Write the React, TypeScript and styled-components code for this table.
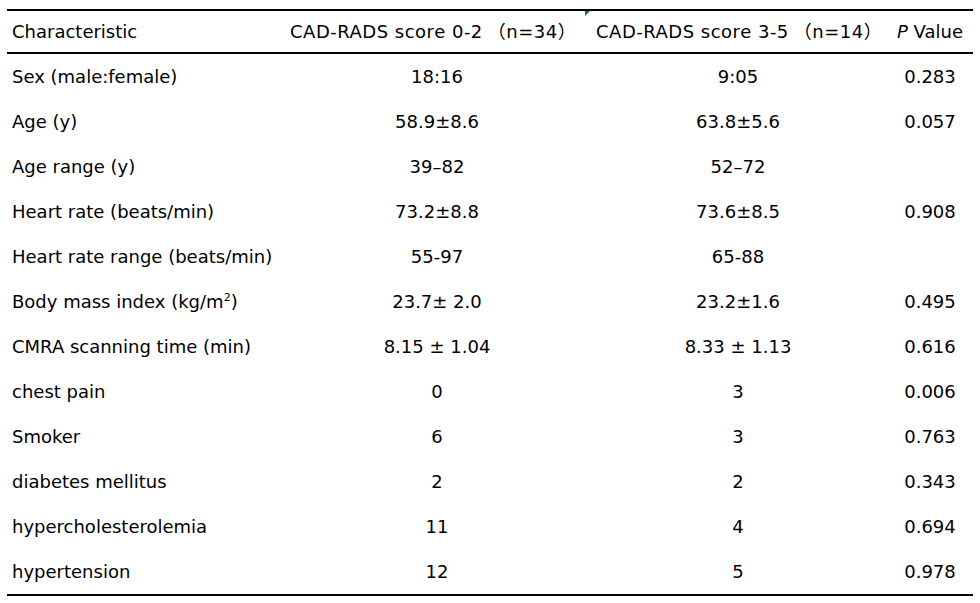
import { createGlobalStyle } from "styled-components";
import styled from "styled-components";

const GlobalStyle = createGlobalStyle`
  html, body {
    margin: 0;
    padding: 0;
    background: #ffffff;
  }
  body {
    font-family: "DejaVu Sans", "Noto Sans CJK SC", sans-serif;
    color: #000000;
  }
`;

const Page = styled.div`
  width: 980px;
  height: 603px;
  padding: 9px 0 0 7px;
  box-sizing: border-box;
`;

const Table = styled.div`
  position: relative;
  width: 966px;
  border-top: 2px solid #000;
  border-bottom: 2px solid #000;
`;

const Row = styled.div<{ $head?: boolean }>`
  display: grid;
  grid-template-columns: 278px 304px 298px 86px;
  height: ${(p) => (p.$head ? "41px" : "45px")};
  align-items: center;
  border-bottom: ${(p) => (p.$head ? "2px solid #000" : "none")};
  font-size: 18px;
  line-height: 1;
`;

const Cell = styled.div<{ $align?: "left" | "center"; $pad?: number }>`
  text-align: ${(p) => p.$align ?? "center"};
  padding-left: ${(p) => p.$pad ?? 0}px;
  white-space: nowrap;
`;

const GroupHead = styled(Cell)`
  letter-spacing: 0.5px;
`;

const Count = styled.span`
  margin-left: 5px;
`;

const Italic = styled.i`
  font-style: italic;
`;

const Sup = styled.sup`
  font-size: 11px;
`;

// excel-style error marker sitting on the corner of the header cell
const Marker = styled.span`
  position: absolute;
  left: 578px;
  top: 0;
  width: 0;
  height: 0;
  border-top: 5px solid #1e7a1e;
  border-right: 5px solid transparent;
`;

type Rec = [React.ReactNode, string, string, string];

const rows: Rec[] = [
  ["Sex (male:female)", "18:16", "9:05", "0.283"],
  ["Age (y)", "58.9\u00b18.6", "63.8\u00b15.6", "0.057"],
  ["Age range (y)", "39\u201382", "52\u201372", ""],
  ["Heart rate (beats/min)", "73.2\u00b18.8", "73.6\u00b18.5", "0.908"],
  ["Heart rate range (beats/min)", "55-97", "65-88", ""],
  [
    <>
      Body mass index (kg/m<Sup>2</Sup>)
    </>,
    "23.7\u00b1 2.0",
    "23.2\u00b11.6",
    "0.495",
  ],
  ["CMRA scanning time (min)", "8.15 \u00b1 1.04", "8.33 \u00b1 1.13", "0.616"],
  ["chest pain", "0", "3", "0.006"],
  ["Smoker", "6", "3", "0.763"],
  ["diabetes mellitus", "2", "2", "0.343"],
  ["hypercholesterolemia", "11", "4", "0.694"],
  ["hypertension", "12", "5", "0.978"],
];

export default function App() {
  return (
    <Page>
      <GlobalStyle />
      <Table>
        <Marker />
        <Row $head>
          <Cell $align="left" $pad={5}>Characteristic</Cell>
          <GroupHead $align="left" $pad={5}>
            CAD-RADS score 0-2<Count>（n=34）</Count>
          </GroupHead>
          <GroupHead $align="left" $pad={7}>
            CAD-RADS score 3-5<Count>（n=14）</Count>
          </GroupHead>
          <Cell $align="left" $pad={10}>
            <Italic>P</Italic> Value
          </Cell>
        </Row>
        {rows.map((r, i) => (
          <Row key={i}>
            <Cell $align="left" $pad={5}>{r[0]}</Cell>
            <Cell>{r[1]}</Cell>
            <Cell>{r[2]}</Cell>
            <Cell>{r[3]}</Cell>
          </Row>
        ))}
      </Table>
    </Page>
  );
}
